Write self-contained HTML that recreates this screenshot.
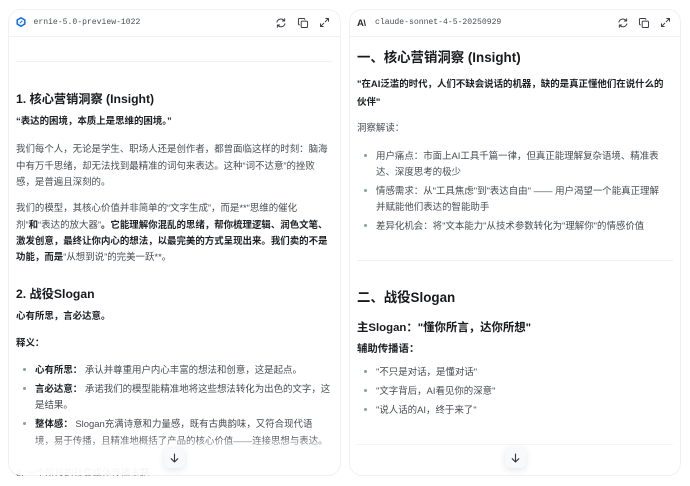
<!DOCTYPE html>
<html lang="zh"><head><meta charset="utf-8">
<style>
html,body{margin:0;padding:0;background:#fff;width:690px;height:486px;overflow:hidden}
body{position:relative;font-family:"Liberation Sans","Noto Sans CJK SC",sans-serif;color:#4a4f57}
.panel{position:absolute;top:9px;width:333px;height:467px;border:1px solid #f0f1f4;border-radius:13px;box-sizing:border-box;background:#fff;overflow:hidden}
.p1{left:8px}.p2{left:349px;width:332px}
.head{position:absolute;left:0;top:0;right:0;height:26px;border-bottom:1px solid #f1f2f4}
.t{position:absolute;white-space:nowrap;font-size:9.45px;line-height:16px;height:16px;color:#474c53;margin-top:2px}
.b{font-weight:700;color:#1d2025}
.h{font-weight:700;color:#17191d;font-size:13.4px;line-height:20px;height:20px;margin-top:1px}
.h3{font-weight:700;color:#17191d;font-size:11.4px;line-height:18px;height:18px;margin-top:1px}
.m{position:absolute;font-family:"Liberation Mono",monospace;font-size:8.1px;line-height:12px;color:#4a4f57;white-space:nowrap}
.hr{position:absolute;height:1px;background:#f0f1f3}
.dot{position:absolute;width:3px;height:3px;border-radius:50%;background:#8c99ae}
.fade{position:absolute;top:436px;height:39px;width:331px;background:linear-gradient(to bottom,rgba(255,255,255,0),rgba(255,255,255,.85) 40%,rgba(255,255,255,.93));}
.btn{position:absolute;top:447px;width:21px;height:21px;border-radius:6px;background:#f8f9fb;box-shadow:0 2px 7px rgba(30,40,60,.11);}
svg{position:absolute;overflow:visible}
</style></head><body>

<div class="panel p1"><div class="head"></div></div>
<div class="panel p2"><div class="head"></div></div>

<!-- left header -->
<svg style="left:16px;top:17px" width="10" height="10" viewBox="0 0 12 12"><path d="M6 1 10.500 3.500V8.500L6 11 1.500 8.500V3.500Z" fill="none" stroke="#1a73e8" stroke-width="2" stroke-linejoin="round"/><path d="M4.500 7.500 7.500 4.500" stroke="#1a73e8" stroke-width="1.300"/></svg>
<div class="m" style="left:33.500px;top:16.500px">ernie-5.0-preview-1022</div>
<!-- right header -->
<div class="t" style="left:357px;top:13.500px;font-size:9.500px;font-weight:700;color:#2a2a2a;letter-spacing:-.5px">A\</div>
<div class="m" style="left:375px;top:16.500px">claude-sonnet-4-5-20250929</div>

<!-- icons left -->
<svg style="left:276px;top:18px" width="10" height="10" viewBox="0 0 11 11" fill="none" stroke="#3c4046" stroke-width="1.100" stroke-linecap="round" stroke-linejoin="round"><path d="M1 4.500A4.500 4.500 0 0 1 9 3M9.800 6.500A4.500 4.500 0 0 1 2 8"/><path d="M9.500 .8V3.300H7M1.500 10.200V7.700H4"/></svg>
<svg style="left:298px;top:18px" width="10" height="10" viewBox="0 0 11 11" fill="none" stroke="#3c4046" stroke-width="1.100" stroke-linecap="round" stroke-linejoin="round"><rect x="3.500" y="3.500" width="7" height="7" rx="1.300"/><path d="M7.500 1.500A1 1 0 0 0 6.500 .5H1.500A1 1 0 0 0 .5 1.500V6.500A1 1 0 0 0 1.500 7.500"/></svg>
<svg style="left:320px;top:18px" width="9" height="9" viewBox="0 0 9 9" fill="none" stroke="#3c4046" stroke-width="1" stroke-linecap="round" stroke-linejoin="round"><path d="M8.500 .5 5.200 3.800M5.800 .5H8.500V3.200M.5 8.500 3.800 5.200M.5 5.800V8.500H3.200"/></svg>
<!-- icons right -->
<svg style="left:617.500px;top:18px" width="10" height="10" viewBox="0 0 11 11" fill="none" stroke="#3c4046" stroke-width="1.100" stroke-linecap="round" stroke-linejoin="round"><path d="M1 4.500A4.500 4.500 0 0 1 9 3M9.800 6.500A4.500 4.500 0 0 1 2 8"/><path d="M9.500 .8V3.300H7M1.500 10.200V7.700H4"/></svg>
<svg style="left:639px;top:18px" width="10" height="10" viewBox="0 0 11 11" fill="none" stroke="#3c4046" stroke-width="1.100" stroke-linecap="round" stroke-linejoin="round"><rect x="3.500" y="3.500" width="7" height="7" rx="1.300"/><path d="M7.500 1.500A1 1 0 0 0 6.500 .5H1.500A1 1 0 0 0 .5 1.500V6.500A1 1 0 0 0 1.500 7.500"/></svg>
<svg style="left:661px;top:18px" width="9" height="9" viewBox="0 0 9 9" fill="none" stroke="#3c4046" stroke-width="1" stroke-linecap="round" stroke-linejoin="round"><path d="M8.500 .5 5.200 3.800M5.800 .5H8.500V3.200M.5 8.500 3.800 5.200M.5 5.800V8.500H3.200"/></svg>

<!-- left content -->
<div class="hr" style="left:16px;width:316px;top:61px"></div>
<div class="t h" style="left:16px;top:88px;font-size:12.200px">1. 核心营销洞察 (Insight)</div>
<div class="t b" style="left:16px;top:112px">“表达的困境，本质上是思维的困境。”</div>
<div class="t" style="left:16px;top:140px">我们每个人，无论是学生、职场人还是创作者，都曾面临这样的时刻：脑海</div>
<div class="t" style="left:16px;top:157px">中有万千思绪，却无法找到最精准的词句来表达。这种“词不达意”的挫败</div>
<div class="t" style="left:16px;top:173px">感，是普遍且深刻的。</div>
<div class="t" style="left:16px;top:199px">我们的模型，其核心价值并非简单的“文字生成”，而是**“思维的催化</div>
<div class="t" style="left:16px;top:216px">剂”<span class="b">和</span>“表达的放大器”<span class="b">。它能理解你混乱的思绪，帮你梳理逻辑、润色文笔、</span></div>
<div class="t b" style="left:16px;top:232px">激发创意，最终让你内心的想法，以最完美的方式呈现出来。我们卖的不是</div>
<div class="t" style="left:16px;top:248px"><span class="b">功能，而是</span>“从想到说”的完美一跃**。</div>
<div class="t h" style="left:16px;top:283px;font-size:12.200px">2. 战役Slogan</div>
<div class="t b" style="left:16px;top:307px">心有所思，言必达意。</div>
<div class="t b" style="left:16px;top:334px">释义：</div>
<div class="dot" style="left:23px;top:368px"></div>
<div class="t" style="left:35px;top:361px"><span class="b">心有所思：</span> 承认并尊重用户内心丰富的想法和创意，这是起点。</div>
<div class="dot" style="left:23px;top:387px"></div>
<div class="t" style="left:35px;top:380px"><span class="b">言必达意：</span> 承诺我们的模型能精准地将这些想法转化为出色的文字，这</div>
<div class="t" style="left:35px;top:396px">是结果。</div>
<div class="dot" style="left:23px;top:422px"></div>
<div class="t" style="left:35px;top:415px"><span class="b">整体感：</span> Slogan充满诗意和力量感，既有古典韵味，又符合现代语</div>
<div class="t" style="left:35px;top:432px">境，易于传播，且精准地概括了产品的核心价值——连接思想与表达。</div>
<div class="t" style="left:16px;top:464px;height:10px;overflow:hidden;opacity:.7">3. 一个阶段的社交媒体传播主题</div>

<!-- right content -->
<div class="t h" style="left:357px;top:47px">一、核心营销洞察 (Insight)</div>
<div class="t b" style="left:357px;top:75px">"在AI泛滥的时代，人们不缺会说话的机器，缺的是真正懂他们在说什么的</div>
<div class="t b" style="left:357px;top:93px">伙伴"</div>
<div class="t" style="left:357px;top:119px">洞察解读：</div>
<div class="dot" style="left:364px;top:154px"></div>
<div class="t" style="left:376px;top:147px">用户痛点：市面上AI工具千篇一律，但真正能理解复杂语境、精准表</div>
<div class="t" style="left:376px;top:163px">达、深度思考的极少</div>
<div class="dot" style="left:364px;top:189px"></div>
<div class="t" style="left:376px;top:182px">情感需求：从"工具焦虑"到"表达自由" —— 用户渴望一个能真正理解</div>
<div class="t" style="left:376px;top:198px">并赋能他们表达的智能助手</div>
<div class="dot" style="left:364px;top:224px"></div>
<div class="t" style="left:376px;top:217px">差异化机会：将"文本能力"从技术参数转化为"理解你"的情感价值</div>
<div class="hr" style="left:357px;width:316px;top:260px"></div>
<div class="t h" style="left:357px;top:287px">二、战役Slogan</div>
<div class="t h3" style="left:357px;top:318px">主Slogan："懂你所言，达你所想"</div>
<div class="t b" style="left:357px;top:340px;font-size:10.400px">辅助传播语：</div>
<div class="dot" style="left:364px;top:370px"></div>
<div class="t" style="left:376px;top:363px">"不只是对话，是懂对话"</div>
<div class="dot" style="left:364px;top:389px"></div>
<div class="t" style="left:376px;top:382px">"文字背后，AI看见你的深意"</div>
<div class="dot" style="left:364px;top:408px"></div>
<div class="t" style="left:376px;top:401px">"说人话的AI，终于来了"</div>
<div class="hr" style="left:357px;width:316px;top:444px"></div>

<!-- fades -->
<div class="fade" style="left:9px;border-radius:0 0 12px 12px"></div>
<div class="fade" style="left:350px;width:330px;border-radius:0 0 12px 12px;opacity:.5"></div>

<!-- scroll buttons -->
<div class="btn" style="left:164px"></div>
<div class="btn" style="left:505px"></div>
<svg style="left:170px;top:453px" width="9" height="10" viewBox="0 0 9 10" fill="none" stroke="#33373d" stroke-width="1.100" stroke-linecap="round" stroke-linejoin="round"><path d="M4.500 1V9M1.200 5.700 4.500 9 7.800 5.700"/></svg>
<svg style="left:511px;top:453px" width="9" height="10" viewBox="0 0 9 10" fill="none" stroke="#33373d" stroke-width="1.100" stroke-linecap="round" stroke-linejoin="round"><path d="M4.500 1V9M1.200 5.700 4.500 9 7.800 5.700"/></svg>
</body></html>
